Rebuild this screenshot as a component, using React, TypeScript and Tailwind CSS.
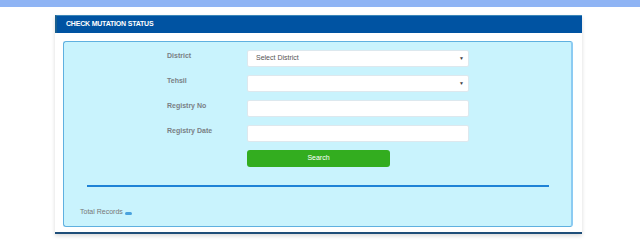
import React from "react";

const font = { fontFamily: '"Liberation Sans", Arial, sans-serif' };

function Row({ label, children }: { label: string; children: React.ReactNode }) {
  return (
    <div className="flex items-start h-[17px]">
      <div className="w-[80px] pt-[1px] text-[7px] leading-[9px] font-bold text-[#7a7f85]">{label}</div>
      {children}
    </div>
  );
}

function SelectBox({ text }: { text?: string }) {
  return (
    <div className="w-[222px] h-[17px] bg-white rounded-[2px] border border-[#dde8ee] flex items-center justify-between pl-[8px] pr-[4px]">
      <span className="text-[7px] text-[#555]">{text ?? ""}</span>
      <span className="text-[5px] text-[#444] leading-none">▼</span>
    </div>
  );
}

function InputBox() {
  return <div className="w-[222px] h-[17px] bg-white rounded-[2px] border border-[#dde8ee]" />;
}

export default function App() {
  return (
    <div className="w-[640px] h-[246px] bg-white overflow-hidden" style={font}>
      <div className="h-[7px] bg-[#8fb4f4]" />
      <div className="ml-[55px] mt-[8px] w-[527px] bg-white shadow-[0_2px_4px_rgba(0,0,0,0.15)] border-b-[2px] border-[#1f4e79]">
        <div className="h-[18px] bg-[#0053a2] border-t border-[#3b86b8] border-l-[2px] border-l-[#1a5f8e] flex items-center pl-[9px]">
          <span className="text-[7px] font-bold text-white tracking-[-0.2px]">CHECK MUTATION STATUS</span>
        </div>
        <div className="pt-[8px] pl-[8px] pr-[9px] pb-[5px]">
          <div className="h-[186px] bg-[#c9f3fd] rounded-[3px] border border-[#5fb0e0] border-r-[2px] border-r-[#8ccbf2] relative">
            <div className="pl-[103px] pt-[8px] flex flex-col gap-[8px]">
              <Row label="District"><SelectBox text="Select District" /></Row>
              <Row label="Tehsil"><SelectBox /></Row>
              <Row label="Registry No"><InputBox /></Row>
              <Row label="Registry Date"><InputBox /></Row>
              <div className="flex h-[17px]">
                <div className="w-[80px]" />
                <div className="w-[143px] h-[17px] bg-[#33ad1f] rounded-[3px] flex items-center justify-center text-[7px] text-white">
                  Search
                </div>
              </div>
            </div>
            <div className="ml-[23px] mt-[18px] w-[462px] h-[2px] bg-[#1f82d6]" />
            <div className="ml-[16px] mt-[20px] flex items-center gap-[2px]">
              <span className="text-[7px] text-[#777]">Total Records</span>
              <span className="w-[7px] h-[3px] rounded-full bg-[#4aa2de] mt-[2px]" />
            </div>
          </div>
        </div>
      </div>
    </div>
  );
}
